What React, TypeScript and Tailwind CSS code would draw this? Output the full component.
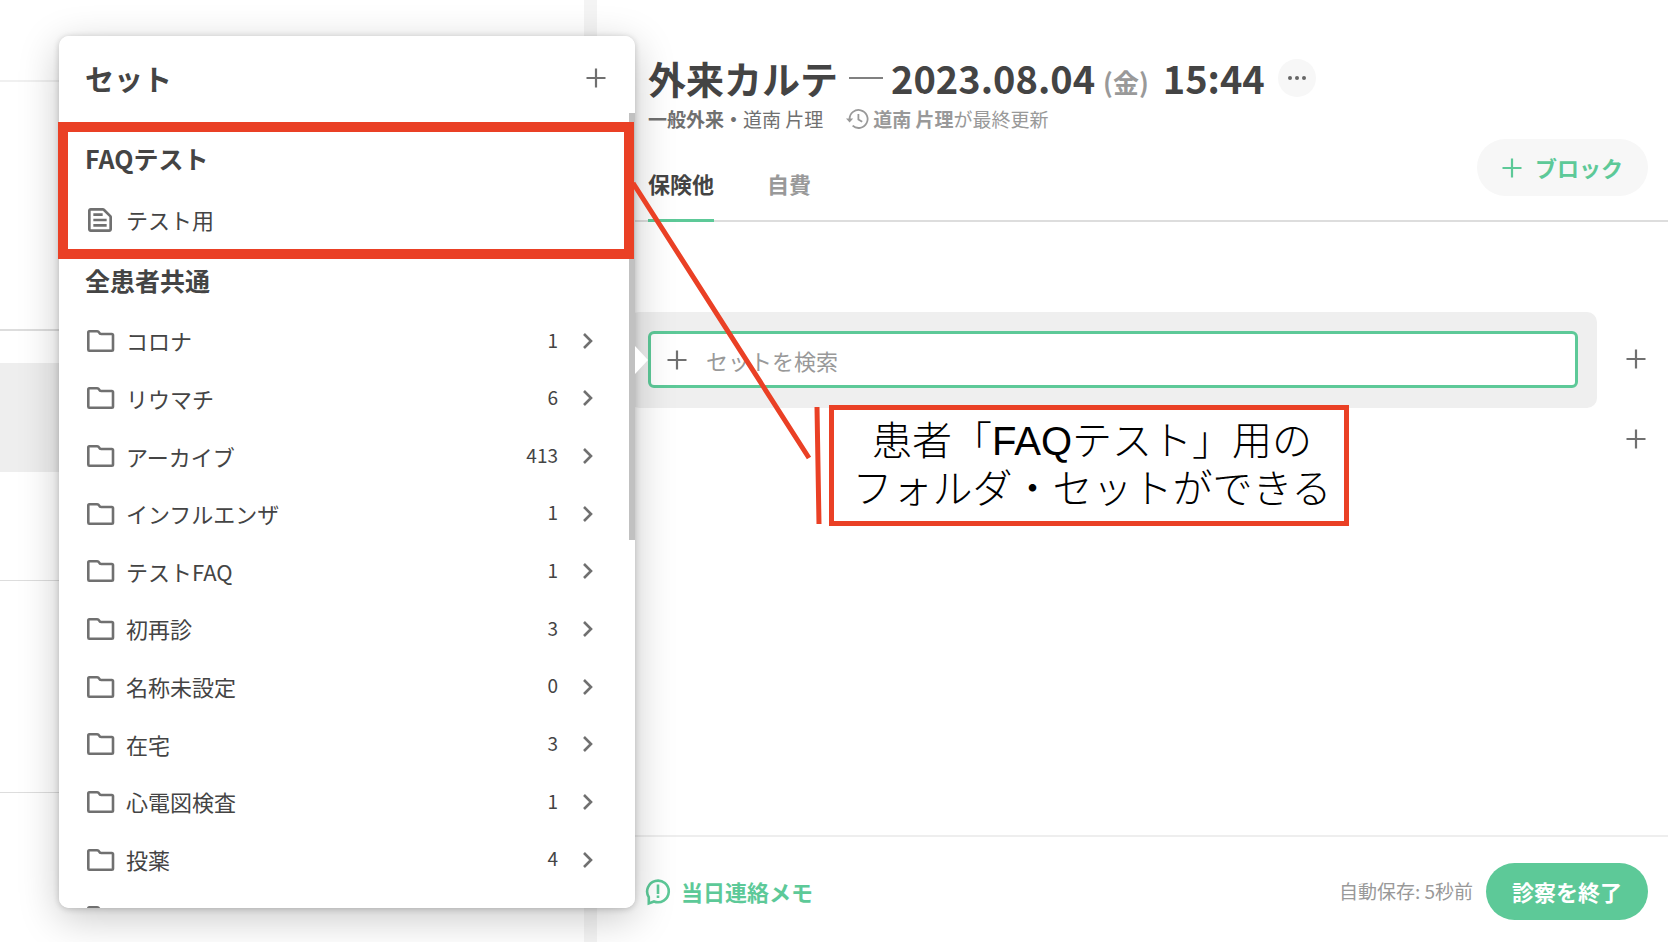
import React, { useState } from 'react';
import { MdOutlineTextSnippet } from 'react-icons/md';

const folders = [
  { name: 'コロナ', count: 1 },
  { name: 'リウマチ', count: 6 },
  { name: 'アーカイブ', count: 413 },
  { name: 'インフルエンザ', count: 1 },
  { name: 'テストFAQ', count: 1 },
  { name: '初再診', count: 3 },
  { name: '名称未設定', count: 0 },
  { name: '在宅', count: 3 },
  { name: '心電図検査', count: 1 },
  { name: '投薬', count: 4 },
];

const tabs = [
  { id: 'insurance', label: '保険他' },
  { id: 'self', label: '自費' },
];

const PlusIcon = ({ className = '' }: { className?: string }) => (
  <svg viewBox="0 0 20 20" className={`h-5 w-5 shrink-0 ${className}`} fill="none" stroke="currentColor" strokeWidth="2.2">
    <path d="M10 .5v19M.5 10h19" />
  </svg>
);

const FolderIcon = () => (
  <svg viewBox="0 0 28 24" className="h-6 w-7 shrink-0 text-[#707070]" fill="none" stroke="currentColor" strokeWidth="2.6" strokeLinejoin="round">
    <path d="M2.3 2.2h7.8q1.4 0 2 1.4t2 1.4h10.7q1.2 0 1.2 1.2v14.4q0 1.2-1.2 1.2H2.3q-1 0-1-1.2V3.4q0-1.2 1-1.2z" />
  </svg>
);

const ChevronIcon = () => (
  <svg viewBox="0 0 12 18" className="h-[18px] w-3 shrink-0 text-[#707070]" fill="none" stroke="currentColor" strokeWidth="2.6">
    <path d="M2 2l7 7-7 7" />
  </svg>
);

const HistoryIcon = () => (
  <svg viewBox="0 0 24 22" className="h-[22px] w-6 shrink-0" fill="none" stroke="currentColor" strokeWidth="1.8">
    <path d="M4.6 11a9 9 0 1 1 3 6.7M13.4 6v5.4l3.8 2.4" />
    <path d="M1 10.4h7.2l-3.6 4z" fill="currentColor" stroke="none" />
  </svg>
);

const MemoIcon = () => (
  <svg viewBox="0 0 26 28" className="h-7 w-[26px] shrink-0" fill="none" stroke="currentColor" strokeWidth="2.6">
    <path d="M3.8 25.4v-6.2A10.8 10.8 0 1 1 9 23.5z" />
    <path d="M13 6.6v9.4M13 17.6v2.4" />
  </svg>
);

const SetPopover: React.FC = () => (
  <section className="absolute top-9 bottom-[34px] left-[59px] w-[576px] rounded-[10px] shadow-[0_10px_40px_rgba(0,0,0,0.22),0_1px_6px_rgba(0,0,0,0.2)]">
    {/* Pointer towards the search box */}
    <div className="absolute top-[310px] -right-[13px] h-7 w-[13px] bg-white [clip-path:polygon(0_0,100%_50%,0_100%)]" />
    <div className="flex h-full flex-col overflow-hidden rounded-[10px] bg-white">
      <header className="flex h-[77px] shrink-0 items-center justify-between pt-1.5 pr-[29px] pl-[26px]">
        <h2 className="text-[29px] leading-8 font-bold">セット</h2>
        <button aria-label="セットを追加" className="text-[#707070]">
          <PlusIcon />
        </button>
      </header>
      <div className="min-h-0 flex-1 overflow-hidden pt-4">
        <h3 className="flex h-[60px] items-center pl-[26px] text-[25px] font-bold">FAQテスト</h3>
        <button className="flex h-[61px] w-full items-center gap-[10px] pl-[25px] text-[22px]">
          <MdOutlineTextSnippet className="h-8 w-8 shrink-0 text-[#707070]" />
          テスト用
        </button>
        <h3 className="flex h-[62px] items-center pl-[26px] text-[25px] font-bold">全患者共通</h3>
        <ul className="grid h-[634px] auto-rows-fr">
          {folders.map((folder) => (
            <li key={folder.name}>
              <button className="flex h-full w-full items-center pr-[41px] pl-[28px] text-left text-[22px]">
                <FolderIcon />
                <span className="ml-[11px] flex-1">{folder.name}</span>
                <span className="mr-6 pb-0.5 text-[19px]">{folder.count}</span>
                <ChevronIcon />
              </button>
            </li>
          ))}
          <li className="flex items-center pl-[28px]">
            <FolderIcon />
          </li>
        </ul>
      </div>
    </div>
    <div className="absolute top-[77px] right-0 h-[427px] w-1.5 bg-[#c1c1c1]" />
  </section>
);

const Annotations: React.FC = () => (
  <div className="pointer-events-none absolute inset-0">
    <div className="absolute top-[122px] left-[58px] h-[137px] w-[576px] border-[10px] border-[#ea4025]" />
    <svg className="absolute top-0 left-0 h-[530px] w-[830px]" fill="none" stroke="#ea4025" strokeWidth="5">
      <path d="M633 183L809 458M817 407l2 117" />
    </svg>
    <p className="absolute top-[405px] left-[829px] h-[121px] w-[520px] border-[5px] border-[#ea4025] bg-white pt-[7px] pl-1.5 text-center font-['Liberation_Sans','Noto_Sans_CJK_JP',sans-serif] text-[40px] leading-[48px] font-light whitespace-nowrap text-black">
      患者「FAQテスト」用の
      <br />
      フォルダ・セットができる
    </p>
  </div>
);

const App: React.FC = () => {
  const [activeTab, setActiveTab] = useState('insurance');

  return (
    <div lang="ja" className="relative flex h-screen overflow-hidden bg-white font-['Noto_Sans_CJK_JP',sans-serif] text-[#444]">
      {/* Past records column */}
      <aside className="flex w-[584px] shrink-0 flex-col">
        <div className="h-[82px] border-b-2 border-[#f0f0f0]" />
        <div className="h-[249px] border-b-2 border-[#ddd]" />
        <div className="mt-8 h-[109px] bg-[#eee]" />
        <div className="h-[109px] border-b border-[#ddd]" />
        <div className="h-[212px] border-b border-[#ddd]" />
      </aside>
      <div className="w-[13px] shrink-0 bg-[#f4f4f4]" />

      <main className="flex min-w-0 flex-1 flex-col">
        <header className="flex items-end justify-between border-b-2 border-[#ddd] pt-[50px] pr-5 pl-[51px]">
          <div>
            <div className="flex h-14 items-center">
              <h1 className="flex items-center text-[38px] leading-[56px] font-bold whitespace-nowrap">
                外来カルテ
                <span className="mr-2 ml-[11px] h-0.5 w-[34px] bg-[#808080]" />
                2023.08.04
                <span className="mr-[14px] ml-2 pt-2 text-[26px] leading-8 text-[#999]">(金)</span>
                15:44
              </h1>
              <button aria-label="メニュー" className="ml-[13px] flex h-[38px] w-[38px] items-center justify-center gap-[3px] rounded-full bg-[#f7f7f7]">
                <span className="h-1 w-1 rounded-full bg-[#666]" />
                <span className="h-1 w-1 rounded-full bg-[#666]" />
                <span className="h-1 w-1 rounded-full bg-[#666]" />
              </button>
            </div>
            <div className="flex h-[26px] items-center text-[19px] leading-6 whitespace-nowrap text-[#707070]">
              <span>
                <b>一般外来・</b>道南 片理
              </span>
              <span className="ml-[22px] flex items-center gap-1 text-[#999]">
                <HistoryIcon />
                <span>
                  <b>道南 片理</b>が最終更新
                </span>
              </span>
            </div>
            <nav className="mt-4 -mb-0.5 flex gap-[53px]">
              {tabs.map((tab) => (
                <button
                  key={tab.id}
                  onClick={() => setActiveTab(tab.id)}
                  className={`h-[74px] border-y-[3px] border-t-transparent pb-1 text-[22px] font-bold ${
                    activeTab === tab.id ? 'border-b-[#5dc998] text-[#444]' : 'border-b-transparent text-[#999]'
                  }`}
                >
                  {tab.label}
                </button>
              ))}
            </nav>
          </div>
          <button className="mb-6 flex h-[57px] shrink-0 items-center gap-[13px] rounded-full bg-[#f7f7f7] px-[25px] text-[22px] font-bold text-[#5dc998]">
            <PlusIcon />
            ブロック
          </button>
        </header>

        <div className="flex flex-1 pt-[90px] pl-8">
          <div className="h-24 flex-1 rounded-[10px] bg-[#efefef] p-[19px] pb-5">
            <label className="flex h-full items-center gap-[19px] rounded-md border-[3px] border-[#5dc998] bg-white px-4 text-[#707070]">
              <PlusIcon />
              <input
                type="text"
                aria-label="セットを検索"
                placeholder="セットを検索"
                className="min-w-0 flex-1 text-[22px] leading-8 outline-none placeholder:text-[#999]"
              />
            </label>
          </div>
          <div className="flex w-[71px] flex-col pl-1.5 text-[#707070]">
            <button aria-label="行を追加" className="flex h-[94px] items-center justify-center">
              <PlusIcon />
            </button>
            <button aria-label="下に行を追加" className="flex h-[66px] items-center justify-center">
              <PlusIcon />
            </button>
          </div>
        </div>

        <footer className="flex h-[107px] shrink-0 items-center justify-between border-t-2 border-[#eee] pt-1 pr-5 pl-12">
          <button className="flex items-center gap-[10px] text-[22px] font-bold text-[#5dc998]">
            <MemoIcon />
            当日連絡メモ
          </button>
          <div className="flex items-center gap-[13px]">
            <span className="text-[19px] text-[#999]">自動保存: 5秒前</span>
            <button className="h-[57px] rounded-full bg-[#5dc998] px-[26px] text-[22px] font-bold text-white">診察を終了</button>
          </div>
        </footer>
      </main>

      <SetPopover />
      <Annotations />
    </div>
  );
};

export default App;
